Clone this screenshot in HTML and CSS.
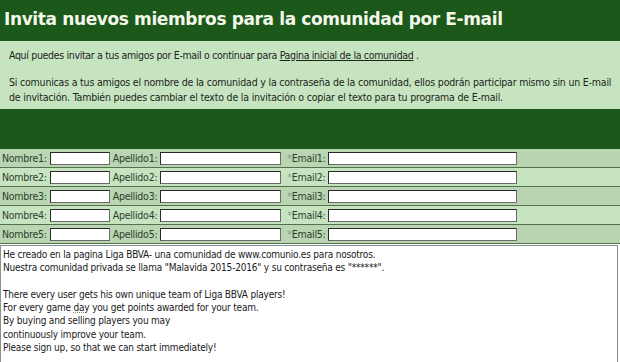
FILE: index.html
```html
<!DOCTYPE html>
<html lang="es">
<head>
<meta charset="utf-8">
<title>Invita nuevos miembros</title>
<link rel="stylesheet" href="styles.css">
</head>
<body>
<div class="page">
  <div class="header"><h1 class="title">Invita nuevos miembros para la comunidad por E-mail</h1></div>
  <div class="intro">
    <p class="intro-line">Aquí puedes invitar a tus amigos por E-mail o continuar para <a class="link" href="#">Pagina inicial de la comunidad</a> .</p>
    <p class="intro-para">Si comunicas a tus amigos el nombre de la comunidad y la contraseña de la comunidad, ellos podrán participar mismo sin un <span class="nobr">E-mail</span> de invitación. También puedes cambiar el texto de la invitación o copiar el texto para tu programa de <span class="nobr">E-mail</span>.</p>
  </div>
  <div class="band"></div>
  <div class="rows">
    <div class="row dark"><span class="lbl">Nombre1:</span><span class="box box-n"></span><span class="lbl">Apellido1:</span><span class="box box-a"></span><span class="lbl"><span class="star">*</span>Email1:</span><span class="box box-e"></span></div>
    <div class="row light"><span class="lbl">Nombre2:</span><span class="box box-n"></span><span class="lbl">Apellido2:</span><span class="box box-a"></span><span class="lbl"><span class="star">*</span>Email2:</span><span class="box box-e"></span></div>
    <div class="row dark"><span class="lbl">Nombre3:</span><span class="box box-n"></span><span class="lbl">Apellido3:</span><span class="box box-a"></span><span class="lbl"><span class="star">*</span>Email3:</span><span class="box box-e"></span></div>
    <div class="row light"><span class="lbl">Nombre4:</span><span class="box box-n"></span><span class="lbl">Apellido4:</span><span class="box box-a"></span><span class="lbl"><span class="star">*</span>Email4:</span><span class="box box-e"></span></div>
    <div class="row dark"><span class="lbl">Nombre5:</span><span class="box box-n"></span><span class="lbl">Apellido5:</span><span class="box box-a"></span><span class="lbl"><span class="star">*</span>Email5:</span><span class="box box-e"></span></div>
  </div>
  <div class="message">
    <div class="mline">He creado en la pagina Liga BBVA- una comunidad de www.comunio.es para nosotros.</div>
    <div class="mline">Nuestra comunidad privada se llama "Malavida 2015-2016" y su contraseña es "******".</div>
    <div class="mline">&nbsp;</div>
    <div class="mline">There every user gets his own unique team of Liga BBVA players!</div>
    <div class="mline">For every game <span class="spell">day</span> you get points awarded for your team.</div>
    <div class="mline">By buying and selling players you may</div>
    <div class="mline">continuously improve your team.</div>
    <div class="mline">Please sign up, so that we can start immediately!</div>
  </div>
</div>
</body>
</html>
```
FILE: styles.css
```css
html, body {
  margin: 0;
  padding: 0;
  background: #ffffff;
}
.page {
  width: 620px;
  font-family: "DejaVu Sans Condensed", "DejaVu Sans", sans-serif;
  font-stretch: condensed;
  font-size: 10.5px;
  letter-spacing: -0.25px;
  color: #1c241c;
}
.header {
  background: #1c5819;
  height: 41px;
  display: flex;
  align-items: center;
  padding-left: 4px;
}
.title {
  margin: 0 0 3px 0;
  font-family: "DejaVu Sans", sans-serif;
  font-stretch: normal;
  font-weight: bold;
  font-size: 17px;
  letter-spacing: -0.38px;
  color: #f2f7ea;
}
.intro {
  background: #c6e4c0;
  height: 68px;
  box-sizing: border-box;
  padding: 7px 3px 0 9px;
}
.intro p {
  margin: 0;
  line-height: 15px;
}
.intro-line {
  letter-spacing: -0.33px;
}
.intro-para {
  padding-top: 12px;
  letter-spacing: -0.2px;
}
.nobr {
  white-space: nowrap;
}
.link {
  color: #1c241c;
  text-decoration: underline;
}
.band {
  background: #1c5819;
  height: 40px;
}
.rows {
  display: flex;
  flex-direction: column;
}
.row {
  height: 18px;
  border-bottom: 1px solid #55704f;
  display: flex;
  align-items: center;
  padding-left: 2px;
  color: #2e3e2e;
}
.row.dark { background: #b9d5b1; }
.row.light { background: #c6e4c0; }
.lbl {
  white-space: nowrap;
}
.star { color: #8a9a8a; }
.box {
  display: block;
  height: 11px;
  background: #ffffff;
  border-top: 1px solid #2a2a2a;
  border-left: 1px solid #2a2a2a;
  border-bottom: 1px solid #6a6a6a;
  border-right: 1px solid #6a6a6a;
  margin-left: 2px;
  margin-right: 3px;
}
.box-n { width: 58px; margin-left: 3px; }
.box-a { width: 119px; margin-left: 3px; margin-right: 6px; }
.box-e { width: 187px; margin-left: 3px; }
.message {
  margin-top: 1px;
  width: 618px;
  height: 140px;
  background: #ffffff;
  border: 1px solid #7f9591;
  box-sizing: border-box;
  padding: 2px 2px;
  color: #1a1a1a;
  font-size: 10px;
  letter-spacing: -0.2px;
}
.mline {
  line-height: 13.3px;
  white-space: nowrap;
}
.spell {
  text-decoration: underline dotted #7a8a7a;
}
```
